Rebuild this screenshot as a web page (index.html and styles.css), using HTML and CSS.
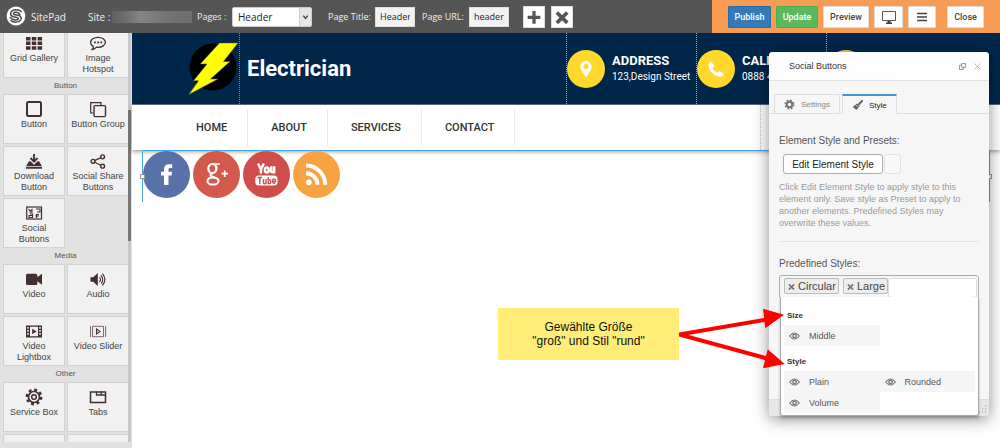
FILE: index.html
```
<!DOCTYPE html>
<html lang="en">
<head>
<meta charset="utf-8">
<title>SitePad Editor</title>
<link rel="stylesheet" href="styles.css">
</head>
<body>
<header class="topbar">
  <svg class="brand-logo" viewBox="0 0 20 20"><circle cx="10" cy="10" r="9.4" fill="#fff"/><path d="M15.2 5.6C12.8 2.8 6.6 3 5 6.2c-1.500 3.600 1.600 4.500 4.800 5 3.200.5 3.200 2 1.200 2.500-2.300.5-5-.3-6.600-2.200M14 8.800C12.500 6 8.600 5.600 7.700 7c-.8 1.600 1.300 1.800 3.300 2.100 3.600.6 5.300 2.600 3.600 5-2 2.600-7 2.600-9.600.6" fill="none" stroke="#4a4a4a" stroke-width="1.500" stroke-linecap="round"/></svg>
  <span class="brand">SitePad</span>
  <span class="site-label">Site :</span>
  <span class="site-name"></span>
  <label class="bar-label" for="pages">Pages :</label>
  <span class="select-box">
    <select id="pages"><option>Header</option></select>
    <svg class="caret" viewBox="0 0 12 18"><path d="M3.500 7.500 6 10.500 8.500 7.500" fill="none" stroke="#444" stroke-width="1.600"/></svg>
  </span>
  <label class="bar-label title-label" for="ptitle">Page Title:</label>
  <input class="bar-input" id="ptitle" value="Header">
  <label class="bar-label url-label" for="purl">Page URL:</label>
  <input class="bar-input" id="purl" value="header">
  <button class="square-btn add-btn" aria-label="Add page"><svg viewBox="0 0 22 22"><path d="M11 4.500v14M4 11.500h14" stroke="#555" stroke-width="3.600"/></svg></button>
  <button class="square-btn" aria-label="Delete page"><svg viewBox="0 0 22 22"><path d="m5.300 6 11.500 11.500M16.800 6 5.300 17.500" stroke="#555" stroke-width="4"/></svg></button>
  <div class="actions">
    <button class="act publish">Publish</button>
    <button class="act update">Update</button>
    <button class="act preview">Preview</button>
    <button class="act icon-act device" aria-label="Device"><svg viewBox="0 0 16 16"><path d="M1.500 2.500h13v9h-13z" fill="none" stroke="#555"/><path d="M6.500 12h3v1.500H11V15H5v-1.500h1.500z" fill="#444"/></svg></button>
    <button class="act icon-act" aria-label="Menu"><svg viewBox="0 0 16 16"><path d="M3 4.500h10M3 8h10M3 11.500h10" stroke="#444" stroke-width="1.500"/></svg></button>
    <button class="act close">Close</button>
  </div>
</header>

<div class="workspace">
  <aside class="sidebar">
    <div class="widgets">
      <div class="tiles">
        <button class="tile"><svg viewBox="0 0 18 18"><path d="M1 3h4.500v3.500H1zM6.800 3h4.500v3.500H6.800zM12.600 3h4.500v3.500h-4.500zM1 7.600h4.500v3.500H1zM6.800 7.600h4.500v3.500H6.800zM12.600 7.600h4.500v3.500h-4.500zM1 12.200h4.500v3.500H1zM6.800 12.200h4.500v3.500H6.800zM12.600 12.200h4.500v3.500h-4.500z" fill="#432f2f"/></svg>Grid Gallery</button>
        <button class="tile"><svg viewBox="0 0 18 18"><path d="M9 3.300c4.200 0 7.400 2.200 7.400 5s-3.200 5-7.400 5l-1.500-.1C6.300 14.600 5 15.300 3.300 15.500c.8-.8 1.200-1.700 1-2.900-1.700-1-2.700-2.600-2.700-4.300 0-2.800 3.200-5 7.400-5z" fill="none" stroke="#432f2f" stroke-width="1.300"/><path d="M5 7.500h1.800v1.700H5zM8.200 7.500H10v1.700H8.200zM11.400 7.500h1.800v1.700h-1.800z" fill="#432f2f"/></svg>Image<br>Hotspot</button>
      </div>
      <h2 class="group">Button</h2>
      <div class="tiles">
        <button class="tile"><svg viewBox="0 0 18 18"><rect x="2" y="2" width="14" height="14" rx="1.500" fill="none" stroke="#432f2f" stroke-width="2"/></svg>Button</button>
        <button class="tile"><svg viewBox="0 0 18 18"><path d="M4.500 13H1.700V2.700H12v2.800" fill="none" stroke="#432f2f" stroke-width="1.200"/><rect x="5" y="5.600" width="11.500" height="11" rx="1" fill="none" stroke="#432f2f" stroke-width="1.400"/></svg>Button Group</button>
        <button class="tile"><svg viewBox="0 0 18 18"><path d="M9 2v7M5.500 6 9 9.600 12.500 6" fill="none" stroke="#432f2f" stroke-width="1.800"/><path d="M1 14.200 4 9.200h1.500l3.500 3.500 3.500-3.500H14l3 5zM1 15h16v1.700H1z" fill="#432f2f"/></svg>Download Button</button>
        <button class="tile"><svg viewBox="0 0 18 18"><path d="m5.500 8.600 6.500-3M5.500 10l6.500 3.500" stroke="#432f2f" stroke-width="1.400"/><g fill="none" stroke="#432f2f" stroke-width="1.400"><circle cx="4" cy="9.300" r="1.900"/><circle cx="13.600" cy="4.800" r="1.900"/><circle cx="13.600" cy="14.200" r="1.900"/></g></svg>Social Share Buttons</button>
        <button class="tile"><svg viewBox="0 0 18 18"><rect x="1.700" y="3" width="14.800" height="12" fill="none" stroke="#432f2f" stroke-width="1.200"/><path d="M3.500 5l1.500 2 2-1.500v2.800H4.500M11 5h4v3h-3M5 10h2.500v3.500H4v-2h3M11.500 14v-3.500H14M10.300 12H14" fill="none" stroke="#432f2f" stroke-width="1.100"/></svg>Social<br>Buttons</button>
      </div>
      <h2 class="group">Media</h2>
      <div class="tiles">
        <button class="tile"><svg viewBox="0 0 18 18"><path d="M2.500 3.800h8.300q1.500 0 1.500 1.500v1.900L17 3.800v11l-4.700-3.500v2.200q0 1.500-1.500 1.500H2.500Q1 15 1 13.500V5.300q0-1.500 1.500-1.500z" fill="#432f2f"/></svg>Video</button>
        <button class="tile"><svg viewBox="0 0 18 18"><path d="M1.500 7.200h2.700L8.800 3v13l-4.600-4.200H1.500z" fill="#432f2f"/><path d="M10.500 7q2 2.500 0 5M12 5.300q3.500 4.200 0 8.400M13.400 3.600q5 5.900 0 11.800" fill="none" stroke="#432f2f" stroke-width="1.100"/></svg>Audio</button>
        <button class="tile"><svg viewBox="0 0 18 18"><path fill-rule="evenodd" d="M1 3.500h16v12H1zM5 4.700v9.600h8V4.700zM2.200 5v1.700h1.600V5zm0 3v1.700h1.600V8zm0 3v1.700h1.600V11zm12-6v1.700h1.600V5zm0 3v1.700h1.600V8zm0 3v1.700h1.600V11z" fill="#432f2f"/><path d="M7.200 6.800 11.600 9.500 7.200 12.300z" fill="#432f2f"/></svg>Video<br>Lightbox</button>
        <button class="tile"><svg viewBox="0 0 18 18"><path d="M3.500 4.300h11v10.400h-11zM1.500 4v11M16.600 4v11" fill="none" stroke="#6b5a5a" stroke-width=".9"/><path d="M7.500 7 11 9.500 7.500 12z" fill="none" stroke="#432f2f" stroke-width="1.100"/></svg>Video Slider</button>
      </div>
      <h2 class="group">Other</h2>
      <div class="tiles">
        <button class="tile"><svg viewBox="0 0 18 18"><circle cx="9" cy="9" r="7.200" fill="none" stroke="#432f2f" stroke-width="2.400" stroke-dasharray="2.900 2.755"/><circle cx="9" cy="9" r="5.500" fill="none" stroke="#432f2f" stroke-width="1.700"/><circle cx="9" cy="9" r="2.300" fill="none" stroke="#432f2f" stroke-width="1.500"/></svg>Service Box</button>
        <button class="tile"><svg viewBox="0 0 18 18"><path d="M1.500 14.500V4h15v10.500z" fill="none" stroke="#432f2f" stroke-width="1.500"/><path d="M7.500 3.500V7H17M12 3.500V7" fill="none" stroke="#432f2f" stroke-width="1.300"/></svg>Tabs</button>
        <button class="tile" aria-label="Accordion"><svg viewBox="0 0 18 18"><path d="M1.500 3.500h15v12h-15z" fill="none" stroke="#432f2f" stroke-width="2"/></svg></button>
        <button class="tile" aria-label="Toggle"><svg viewBox="0 0 18 18"><path d="M2.500 3.500h13v12h-13z" fill="none" stroke="#432f2f" stroke-width="2"/></svg></button>
      </div>
    </div>
    <div class="scroll-track"><div class="scroll-thumb"></div></div>
  </aside>

  <main class="canvas">
    <section class="site-header">
      <svg class="bolt" viewBox="0 0 51 54"><circle cx="25" cy="25" r="23.500" fill="#000"/><path d="M31.500 1H50L35.500 19.500H42L22.500 37H30L.8 52.500 10.500 38.800H5.500L19 22H12.200z" fill="#ff0" stroke="#5a5a10" stroke-width=".5"/></svg>
      <h1 class="site-title">Electrician</h1>
      <div class="contacts">
        <div class="contact"><svg class="badge" viewBox="0 0 38 38"><circle cx="19" cy="19" r="19" fill="#ffd82b"/><path fill-rule="evenodd" d="M19 11c3.200 0 5.500 2.400 5.500 5.500 0 4-3.500 7-5.500 11-2-4-5.500-7-5.500-11C13.500 13.400 15.800 11 19 11zm0 3a2.500 2.500 0 1 0 0 5 2.500 2.500 0 1 0 0-5z" fill="#fff"/></svg><div><strong>ADDRESS</strong><span>123,Design Street</span></div></div>
        <div class="contact"><svg class="badge" viewBox="0 0 38 38"><circle cx="19" cy="19" r="19" fill="#ffd82b"/><path d="M14.300 11.600l3 4.300-1.700 2.300c1 2 2.400 3.400 4.600 4.400l2.200-1.700 4.400 2.700c-.2 2.300-1.800 3.500-3.800 3.200-6.500-1-11.200-6-11.600-11.600 0-1.700 1-3.500 2.900-3.600z" fill="#fff"/></svg><div><strong>CALL</strong><span>0888 456</span></div></div>
        <div class="contact"><svg class="badge" viewBox="0 0 38 38"><circle cx="19" cy="19" r="19" fill="#ffd82b"/></svg></div>
      </div>
    </section>
    <nav class="site-nav">
      <a href="#">HOME</a><a href="#">ABOUT</a><a href="#">SERVICES</a><a href="#">CONTACT</a>
      <span class="nav-guide"></span>
    </nav>
    <section class="social">
      <a href="#" aria-label="Facebook"><svg viewBox="0 0 47 47"><circle cx="23.500" cy="23.500" r="23.500" fill="#5971a9"/><path d="M21 34V24.500h-3v-3.800h3v-2.400c0-3.300 1.800-5.100 5-5.100h3.200v3.900h-2c-1.300 0-1.700.5-1.700 1.700v1.900h3.600l-.5 3.800h-3.100V34z" fill="#fff"/></svg></a>
      <a href="#" aria-label="Google Plus"><svg viewBox="0 0 47 47"><circle cx="23.500" cy="23.500" r="23.500" fill="#d3594b"/><g fill="none" stroke="#fff"><ellipse cx="19.300" cy="17.600" rx="4" ry="4.600" stroke-width="2.200"/><path d="M19.500 13h7.500M23 14.500q1.500 2 .5 4.500" stroke-width="1.600"/><path d="M19.500 22q-3.300 1.600-1.200 3.200l4.200 1.800" stroke-width="2"/><ellipse cx="20" cy="30" rx="5.600" ry="3.600" stroke-width="2"/><path d="M28.500 22.700h6.500M31.700 19.500v6.500" stroke-width="1.700"/></g></svg></a>
      <a href="#" aria-label="YouTube"><svg viewBox="0 0 47 47"><circle cx="23.500" cy="23.500" r="23.500" fill="#cf4d4b"/><path d="m15 12.500 2.900 6v4M20.800 12.500l-2.900 6M28.300 15.300v5.500q2 1 2.900-1V15.300v7.200" fill="none" stroke="#fff" stroke-width="2.500"/><ellipse cx="23.800" cy="18.900" rx="1.900" ry="2.500" fill="none" stroke="#fff" stroke-width="2.500"/><rect x="12.300" y="24.500" width="22.200" height="10" rx="3.500" fill="#fff"/><path d="M14.500 26.500h4.600M16.800 26.500v6.700M20.500 28v4.400q1.500.8 2.500-.5V28v5.200M25.200 26v6.500q2.600.4 2.600-1.500 0-2.800-2.600-2M32.500 31.500q-2.800 2-2.800-1.200t1.500-2.200q1.500 0 1.300 2.300h-2.400" fill="none" stroke="#cf4d4b" stroke-width="1.400"/></svg></a>
      <a href="#" aria-label="RSS"><svg viewBox="0 0 47 47"><circle cx="23.500" cy="23.500" r="23.500" fill="#f7a341"/><circle cx="15.800" cy="31.300" r="2.900" fill="#fff"/><path d="M13 22.200A11.500 11.500 0 0 1 24.500 33.800M13 14.500A19.300 19.300 0 0 1 32.200 33.800" fill="none" stroke="#fff" stroke-width="3.900"/></svg></a>
      <i class="handle handle-left"></i><i class="handle handle-right"></i>
    </section>
  </main>
</div>

<section class="panel">
  <header class="panel-head">
    <h2>Social Buttons</h2>
    <button class="bare" aria-label="Pop out"><svg viewBox="0 0 8 8"><path d="M3 .5h4.500V5H3zM3 2.500H.5v5H5V5" fill="none" stroke="#888"/></svg></button>
    <button class="bare" aria-label="Close panel"><svg viewBox="0 0 8 8"><path d="m.5.5 7 7M7.500.5l-7 7" stroke="#999" stroke-width=".8"/></svg></button>
  </header>
  <div class="tabs">
    <button class="tab"><svg viewBox="0 0 12 12"><circle cx="6" cy="6" r="4.500" fill="none" stroke="#777" stroke-width="2" stroke-dasharray="1.900 1.634"/><circle cx="6" cy="6" r="3" fill="none" stroke="#777" stroke-width="2.200"/></svg>Settings</button>
    <button class="tab active"><svg viewBox="0 0 12 12"><path d="M11.300.7 7 5.200" stroke="#666" stroke-width="2.200" stroke-linecap="round"/><path d="m5 3.800 3.300 3.300-1 1L4 4.800zM3.500 5.200 6.900 8.500 5 11 .8 7.500zM.8 7.500 3 10.500" fill="#666"/></svg>Style</button>
  </div>
  <div class="panel-body">
    <h3>Element Style and Presets:</h3>
    <div class="preset-row"><button class="edit-btn">Edit Element Style</button><button class="mini-btn" aria-label="Preset"></button></div>
    <p class="help">Click Edit Element Style to apply style to this element only. Save style as Preset to apply to another elements. Predefined Styles may overwrite these values.</p>
    <label class="field-label" for="styles">Predefined Styles:</label>
    <div class="tag-box">
      <span class="tag"><button class="bare" aria-label="Remove Circular"><svg viewBox="0 0 8 8"><path d="m1 1.500 6 6M7 1.500l-6 6" stroke="#777" stroke-width="2"/></svg></button>Circular</span>
      <span class="tag"><button class="bare" aria-label="Remove Large"><svg viewBox="0 0 8 8"><path d="m1 1.500 6 6M7 1.500l-6 6" stroke="#777" stroke-width="2"/></svg></button>Large</span>
      <input id="styles" class="tag-input">
      <div class="menu">
        <h4>Size</h4>
        <div class="options">
          <button class="option"><svg viewBox="0 0 11 8"><path d="M.7 4Q5.500-2 10.300 4 5.500 10 .7 4z" fill="none" stroke="#777" stroke-width="1.200"/><circle cx="5.500" cy="4" r="1.700" fill="none" stroke="#777" stroke-width="1.300"/></svg>Middle</button>
        </div>
        <h4>Style</h4>
        <div class="options">
          <button class="option"><svg viewBox="0 0 11 8"><path d="M.7 4Q5.500-2 10.300 4 5.500 10 .7 4z" fill="none" stroke="#777" stroke-width="1.200"/><circle cx="5.500" cy="4" r="1.700" fill="none" stroke="#777" stroke-width="1.300"/></svg>Plain</button>
          <button class="option"><svg viewBox="0 0 11 8"><path d="M.7 4Q5.500-2 10.300 4 5.500 10 .7 4z" fill="none" stroke="#777" stroke-width="1.200"/><circle cx="5.500" cy="4" r="1.700" fill="none" stroke="#777" stroke-width="1.300"/></svg>Rounded</button>
          <button class="option"><svg viewBox="0 0 11 8"><path d="M.7 4Q5.500-2 10.300 4 5.500 10 .7 4z" fill="none" stroke="#777" stroke-width="1.200"/><circle cx="5.500" cy="4" r="1.700" fill="none" stroke="#777" stroke-width="1.300"/></svg>Volume</button>
        </div>
      </div>
    </div>
  </div>
  <footer class="panel-foot"><svg viewBox="0 0 9 9"><path d="M7 1h1.200M7 4h1.200M4 4h1.200M7 7h1.200M4 7h1.200M1 7h1.200" stroke="#999" stroke-width="1.200"/></svg></footer>
</section>

<aside class="callout">Gewählte Größe<br>"groß" und Stil "rund"
  <svg class="arrows" viewBox="0 0 108 66"><path d="M0 28.500 88 13.500M0 28.500 88 52.500" stroke="#f00" stroke-width="4"/><path d="M84 2.700 105 8.700 86.300 22.300zM88.700 43.300 105.700 58 84 62.300z" fill="#f00"/></svg>
</aside>
</body>
</html>
```

FILE: styles.css
```
* { box-sizing: border-box; }

body {
  margin: 0;
  height: 100vh;
  display: flex;
  flex-direction: column;
  position: relative;
  overflow: hidden;
  background: #fff;
  font-family: "Liberation Sans", Arial, sans-serif;
}

h1, h2, h3, h4, p { margin: 0; font-weight: 400; }
button, input, select { font-family: inherit; margin: 0; }
button { padding: 0; cursor: pointer; }
svg { display: block; }
a { text-decoration: none; }

/* Top bar */
.topbar {
  flex: none;
  height: 33px;
  display: flex;
  align-items: center;
  padding-left: 6px;
  background: #555;
  color: #f0f0f0;
  font-family: "Open Sans", sans-serif;
  font-size: 9px;
  white-space: nowrap;
}
.brand-logo { width: 20px; height: 20px; margin-bottom: 2px; }
.brand { margin-left: 5px; width: 57px; font-size: 10px; }
.site-label { width: 24px; font-size: 10px; }
.site-name {
  width: 80px;
  height: 12px;
  margin-right: 5px;
  background: linear-gradient(90deg, #5f5f5f, #6c6c6c 15%, #858585 35%, #7b7b7b 55%, #727272 75%, #6e6e6e);
}
.bar-label { width: 35px; }
.select-box {
  display: flex;
  width: 80px;
  height: 20px;
  background: #fff;
  border: 1px solid #ccc;
  border-radius: 2px;
}
.select-box select {
  flex: 1;
  min-width: 0;
  appearance: none;
  border: 0;
  padding: 0 0 0 5px;
  background: none;
  font-size: 10px;
  color: #222;
}
.caret { width: 12px; height: 18px; background: #e6e6e6; border-left: 1px solid #ccc; }
.title-label { width: 47px; margin-left: 16px; }
.url-label { width: 47px; margin-left: 7px; }
.bar-input {
  width: 40px;
  height: 20px;
  padding: 0 4px;
  border: 1px solid #ddd;
  background: #f2f2f2;
  font-size: 9px;
  color: #222;
}
.square-btn { width: 22px; height: 22px; border: 1px solid #ddd; background: #fff; margin-left: 6px; }
.add-btn { margin-left: 14px; }
.square-btn svg { width: 20px; height: 20px; }

.actions {
  display: flex;
  align-items: center;
  height: 33px;
  gap: 5px;
  margin-left: auto;
  padding: 0 16px;
  background: #f79c55;
}
.act {
  height: 22px;
  border: 1px solid #ddd;
  border-radius: 1px;
  background: #fff;
  color: #444;
  font-family: Roboto, sans-serif;
  font-size: 9px;
  font-weight: 500;
}
.publish { width: 43px; background: #337ab7; border-color: #2e6da4; color: #fff; }
.update { width: 42px; background: #5cb85c; border-color: #4cae4c; color: #fff; }
.preview { width: 46px; }
.icon-act { width: 28px; display: grid; place-items: center; }
.device { width: 29px; }
.icon-act svg { width: 16px; height: 16px; }
.close { width: 37px; margin-left: 6px; }

/* Workspace */
.workspace { flex: 1; min-height: 0; display: flex; }

.sidebar {
  flex: none;
  width: 132px;
  display: flex;
  padding-bottom: 6px;
  background: #e2e2e2;
}
.widgets { width: 128px; overflow: hidden; padding-left: 3px; }
.tiles { display: grid; grid-template-columns: 62px 62px; gap: 2px; }
.tiles:first-child { margin-top: -5px; }
.tile {
  height: 50px;
  display: flex;
  flex-direction: column;
  align-items: center;
  padding: 5px 2px 0;
  border: 1px solid #d2d2d2;
  background: #f1f1f1;
  color: #444;
  font-size: 9px;
  line-height: 11px;
}
.tile svg { flex: none; width: 18px; height: 18px; margin-bottom: 1px; }
.group { height: 16px; line-height: 16px; text-align: center; font-size: 8px; color: #555; }
.scroll-track { flex: none; width: 3px; background: #c8c8c8; }
.scroll-thumb { height: 131px; margin-top: 77px; background: #777; }

/* Edited site */
.canvas { flex: 1; min-width: 0; font-family: Roboto, sans-serif; background: #fff; }

.site-header {
  display: flex;
  height: 72px;
  padding: 0 44px 0 56px;
  background: #00264a;
  border-bottom: 1px solid #5d6d80;
  color: #fff;
}
.bolt { flex: none; width: 51px; height: 54px; margin-top: 9px; }
.site-title {
  padding-left: 7px;
  border-left: 1px dotted #7d8998;
  font-size: 22px;
  font-weight: 700;
  line-height: 72px;
}
.contacts { display: flex; margin-left: auto; }
.contact {
  display: flex;
  align-items: center;
  gap: 7px;
  width: 130px;
  border-left: 1px dotted #9aa4b0;
  white-space: nowrap;
}
.badge { flex: none; width: 38px; height: 38px; }
.contact strong, .contact span { display: block; line-height: 16px; }
.contact strong { font-size: 13px; font-weight: 700; }
.contact span { font-size: 10px; }

.site-nav {
  display: flex;
  align-items: center;
  height: 45px;
  padding-left: 41px;
  box-shadow: 0 2px 4px rgba(0, 0, 0, .35);
}
.site-nav a {
  padding: 0 20px 0 23px;
  border-right: 1px solid #e8e8e8;
  line-height: 36px;
  font-size: 11px;
  font-weight: 500;
  color: #333;
}
.nav-guide { align-self: stretch; margin-left: auto; width: 240px; border-left: 1px dotted #bbb; }

.social {
  position: relative;
  display: flex;
  gap: 3px;
  height: 52px;
  margin: 0 10px;
  border: solid #49a8e8;
  border-width: 1px 1px 0;
}
.social svg { width: 47px; height: 47px; }
.handle { position: absolute; top: 23px; width: 5px; height: 5px; background: #fff; border: 1px solid #999; }
.handle-left { left: -3px; }
.handle-right { right: -3px; }

/* Element settings window */
.panel {
  position: absolute;
  top: 52px;
  right: 11px;
  width: 220px;
  border-radius: 4px;
  background: #f6f6f6;
  box-shadow: 0 3px 16px rgba(0, 0, 0, .45);
  color: #555;
}
.panel-head {
  display: flex;
  align-items: center;
  gap: 8px;
  height: 29px;
  padding: 0 8px 0 20px;
  border-bottom: 1px solid #e2e2e2;
  border-radius: 4px 4px 0 0;
  background: #fdfdfd;
}
.panel-head h2 { flex: 1; font-size: 9px; color: #333; }
.bare { border: 0; background: none; }
.bare svg { width: 7px; height: 7px; }

.tabs {
  display: flex;
  gap: 2px;
  margin-top: 13px;
  padding-left: 5px;
  border-bottom: 1px solid #ddd;
}
.tab {
  display: flex;
  align-items: center;
  gap: 6px;
  height: 19px;
  padding: 0 9px;
  border: 1px solid #ddd;
  border-bottom: 0;
  background: #f6f6f6;
  font-size: 8px;
  color: #888;
}
.tab svg { width: 11px; height: 11px; }
.tab.active { height: 20px; margin-bottom: -1px; border-top: 2px solid #3d96de; color: #222; }

.panel-body { height: 285px; padding: 21px 10px 0; }
.panel-body h3, .field-label { display: block; font-size: 10px; line-height: 12px; }
.preset-row { display: flex; gap: 1px; margin: 7px 0 0 4px; }
.edit-btn {
  width: 100px;
  height: 20px;
  border: 1px solid #aaa;
  border-radius: 3px;
  background: #fff;
  font-size: 10px;
  color: #222;
}
.mini-btn { width: 17px; height: 20px; border: 1px solid #e0e0e0; border-radius: 3px; background: #f8f8f8; }
.help {
  margin-top: 7px;
  padding-bottom: 12px;
  border-bottom: 1px solid #e4e4e4;
  font-size: 9px;
  line-height: 12px;
  color: #999;
}
.field-label { margin-top: 16px; }

.tag-box {
  position: relative;
  display: flex;
  align-items: flex-start;
  gap: 4px;
  height: 24px;
  margin-top: 5px;
  padding: 2px 1px 0 4px;
  border: 1px solid #aaa;
  border-radius: 3px;
}
.tag {
  display: flex;
  align-items: center;
  gap: 3px;
  height: 16px;
  padding: 0 2px 0 3px;
  border: 1px solid #bbb;
  border-radius: 2px;
  background: #eee;
  font-size: 11px;
  color: #444;
}
.tag-input {
  flex: 1;
  min-width: 0;
  height: 20px;
  margin-left: -4px;
  border: 1px solid #ddd;
  border-radius: 3px;
  background: #fff;
}
.menu {
  position: absolute;
  top: 21px;
  left: 0;
  right: -1px;
  padding: 10px 3px 2px;
  border: 1px solid #aaa;
  border-top: 0;
  border-radius: 0 0 3px 3px;
  background: #fff;
  box-shadow: 0 2px 3px rgba(0, 0, 0, .25);
}
.menu h4 { padding-left: 3px; font-size: 8px; font-weight: 700; line-height: 18px; color: #333; }
.options { display: grid; grid-template-columns: 1fr 1fr; margin-bottom: 7px; }
.options:last-child { margin-bottom: 0; }
.option {
  display: flex;
  align-items: center;
  gap: 9px;
  height: 21px;
  padding: 0 5px;
  border: 0;
  background: #f5f5f5;
  font-size: 9px;
  color: #555;
}
.option svg { width: 11px; height: 8px; }

.panel-foot {
  display: flex;
  justify-content: flex-end;
  align-items: flex-end;
  height: 17px;
  padding: 2px;
  border-top: 1px solid #ddd;
  border-radius: 0 0 4px 4px;
  background: #e8e8e8;
}
.panel-foot svg { width: 9px; height: 9px; }

/* Annotation */
.callout {
  position: absolute;
  top: 308px;
  left: 498px;
  width: 181px;
  padding: 12px 0;
  background: #ffed77;
  color: #111;
  font-size: 12px;
  line-height: 14px;
  text-align: center;
}
.arrows { position: absolute; top: -2px; left: 181px; width: 108px; height: 66px; }
```
